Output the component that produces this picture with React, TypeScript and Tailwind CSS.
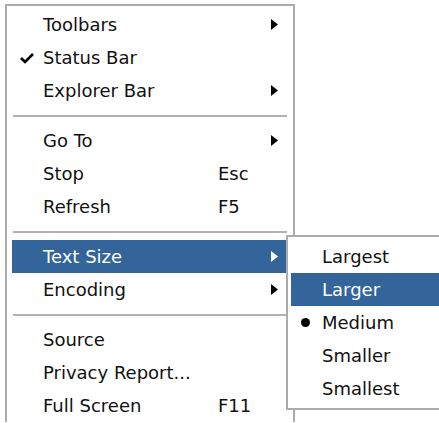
type Item =
  | { kind: "sep" }
  | { kind: "item"; label: string; shortcut?: string; sub?: boolean; checked?: boolean; active?: boolean }

const viewMenu: Item[] = [
  { kind: "item", label: "Toolbars", sub: true },
  { kind: "item", label: "Status Bar", checked: true },
  { kind: "item", label: "Explorer Bar", sub: true },
  { kind: "sep" },
  { kind: "item", label: "Go To", sub: true },
  { kind: "item", label: "Stop", shortcut: "Esc" },
  { kind: "item", label: "Refresh", shortcut: "F5" },
  { kind: "sep" },
  { kind: "item", label: "Text Size", sub: true, active: true },
  { kind: "item", label: "Encoding", sub: true },
  { kind: "sep" },
  { kind: "item", label: "Source" },
  { kind: "item", label: "Privacy Report..." },
  { kind: "item", label: "Full Screen", shortcut: "F11" },
]

const sizes = ["Largest", "Larger", "Medium", "Smaller", "Smallest"]

function Arrow({ white }: { white?: boolean }) {
  return (
    <svg width="7" height="11" viewBox="0 0 7 11" className={white ? "fill-white" : "fill-black"}>
      <path d="M0 0 L7 5.5 L0 11 Z" />
    </svg>
  )
}

function Check() {
  return (
    <svg width="14" height="11" viewBox="0 0 14 11">
      <path d="M1 5 L5 9 L13 1" stroke="#000" strokeWidth="2.6" fill="none" />
    </svg>
  )
}

function MenuRow({ item }: { item: Extract<Item, { kind: "item" }> }) {
  return (
    <div
      className={`relative flex h-[33px] items-center pl-[31px] pr-[10px] ${
        item.active ? "bg-[#33659b] text-white" : "text-[#111]"
      }`}
    >
      {item.checked && (
        <span className="absolute left-[8px] top-[12px]">
          <Check />
        </span>
      )}
      <span className="w-[175px] shrink-0 whitespace-nowrap">{item.label}</span>
      <span className="flex-1 whitespace-nowrap">{item.shortcut}</span>
      {item.sub && <Arrow white={item.active} />}
    </div>
  )
}

export default function App() {
  return (
    <div
      className="relative h-[423px] w-[439px] overflow-hidden bg-white text-[18px] leading-none"
      style={{ fontFamily: '"DejaVu Sans", Tahoma, sans-serif' }}
    >
      {/* main View menu */}
      <div className="ml-[5px] mt-[4px] w-[290px] border-2 border-b-0 border-[#ababab] bg-white px-[5px] pt-[2px]">
        {viewMenu.map((item, i) =>
          item.kind === "sep" ? (
            <div key={i} className="flex h-[17px] items-center px-px">
              <div className="h-[2px] w-full bg-[#b2b2b2]" />
            </div>
          ) : (
            <MenuRow key={i} item={item} />
          )
        )}
      </div>

      {/* Text Size submenu */}
      <div className="absolute left-[286px] top-[235px] w-[200px] border-2 border-[#ababab] bg-white py-[3px] pl-[3px]">
        {sizes.map((s) => (
          <div
            key={s}
            className={`relative flex h-[33px] items-center pl-[31px] ${
              s === "Larger" ? "bg-[#33659b] text-white" : "text-[#111]"
            }`}
          >
            {s === "Medium" && <span className="absolute left-[10px] top-[12px] h-[9px] w-[9px] rounded-full bg-black" />}
            {s}
          </div>
        ))}
      </div>
    </div>
  )
}
